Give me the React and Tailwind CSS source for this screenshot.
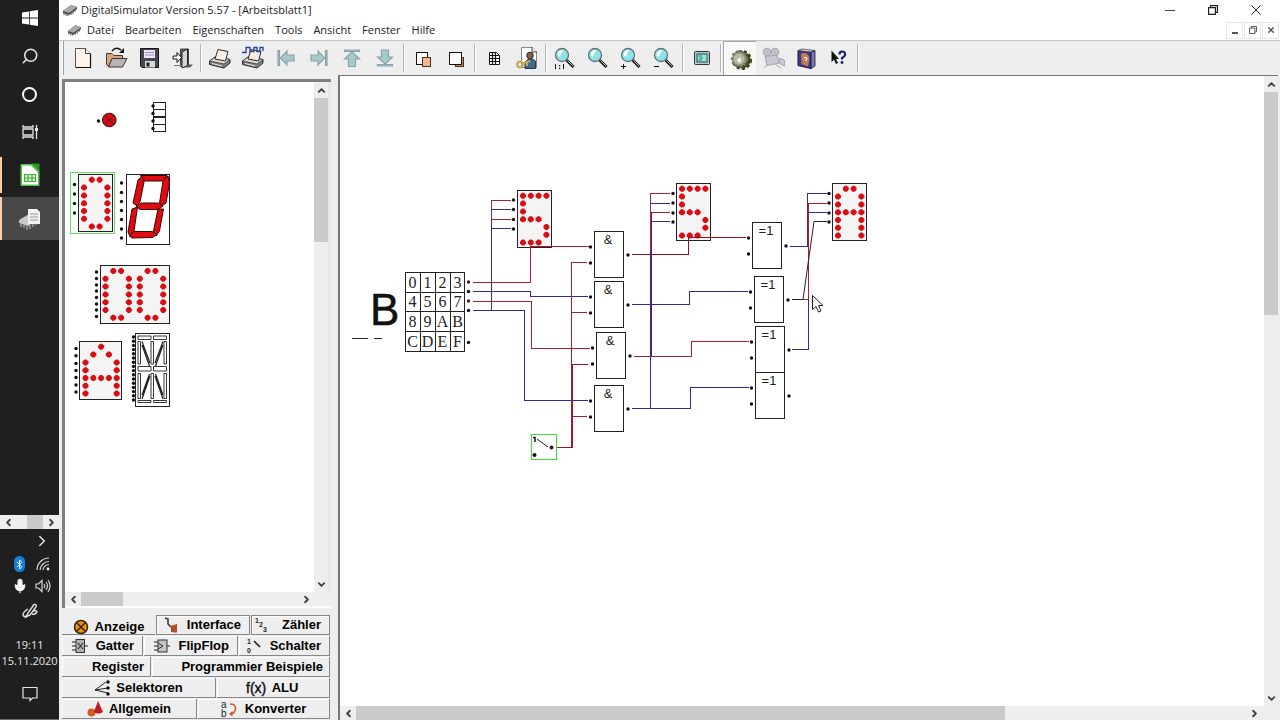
import React from "react";
import { Search, Bluetooth, ChevronLeft, ChevronRight, ChevronUp, ChevronDown, Mic } from "lucide-react";

const RED = "#a8202c";
const BLUE = "#2c2ca0";

/* ---------- small shared pieces ---------- */

function Chip({ className }) {
  return (
    <svg viewBox="0 0 16 12" className={className} aria-hidden="true">
      <path d="M1 7 L9 1 L15 3 L15 5 L7 11 L1 9 Z" fill="#4a4a4a" />
      <path d="M1 7 L9 1 L15 3 L7 9 Z" fill="#a9a9a9" />
      <path d="M2 9 V11 M4 10 V12 M6 10 V12 M9 9 V11 M11 8 V10 M13 6 V8" stroke="#555" />
    </svg>
  );
}

function ScrollBar({ vertical, offset, thumb, label }) {
  const box = vertical ? "w-[14px] flex-col" : "h-[14px] flex-row";
  const arrow = "flex size-4 shrink-0 items-center justify-center text-[#404040]";
  const A = vertical ? ChevronUp : ChevronLeft;
  const B = vertical ? ChevronDown : ChevronRight;
  return (
    <div className={"flex shrink-0 items-center bg-[#eeeeee] " + box} role="group" aria-label={label}>
      <button className={arrow} aria-label="Zurück"><A size={11} strokeWidth={4} /></button>
      <div className={"flex flex-1 overflow-hidden " + (vertical ? "w-full flex-col" : "h-full flex-row")}>
        <div className={offset + " shrink-0"} />
        <div className={thumb + " shrink-0 bg-[#cacaca]"} />
      </div>
      <button className={arrow} aria-label="Weiter"><B size={11} strokeWidth={4} /></button>
    </div>
  );
}

/* ---------- Windows taskbar ---------- */

function TaskButton({ label, active, open, children }) {
  return (
    <button
      aria-label={label}
      className={"flex h-[43px] w-full items-center pr-[2px] " + (active ? "bg-[#484848]" : "")}
    >
      <span className={"w-[2px] bg-[#fbcdab] " + (active ? "h-full" : open ? "h-9" : "h-0")} />
      <span className="flex flex-1 justify-center">{children}</span>
    </button>
  );
}

function Taskbar() {
  const top = "flex h-9 items-center justify-center";
  return (
    <aside className="flex w-[59px] shrink-0 flex-col bg-[#1f1f1f] text-[#e6e6e6]">
      <div className="flex flex-col gap-[2px]">
        <button className={top} aria-label="Start">
          <svg viewBox="0 0 16 16" className="size-4" fill="#fff">
            <path d="M0 2.4 L7 1.4 V7.6 H0 Z M7.8 1.3 L16 0 V7.6 H7.8 Z M0 8.4 H7 V14.6 L0 13.6 Z M7.8 8.4 H16 V16 L7.8 14.7 Z" />
          </svg>
        </button>
        <button className={top} aria-label="Suche"><Search size={18} strokeWidth={2} className="-scale-x-100" /></button>
        <button className={top} aria-label="Cortana"><span className="size-[15px] rounded-full border-2 border-white" /></button>
        <button className={top} aria-label="Taskansicht">
          <svg viewBox="0 0 16 16" className="size-4" fill="none" stroke="#e6e6e6" strokeWidth="1.3">
            <path d="M1 1 V3 H11 V1 M1 15 V13 H11 V15 M1 5 H11 V11 H1 Z M14.5 1 V4 M14.5 7 V15" />
            <path d="M14.5 4 V7" strokeWidth="3" />
          </svg>
        </button>
      </div>
      <div className="flex flex-col gap-px pt-[3px]">
        <TaskButton label="LibreOffice Calc" open>
          <svg viewBox="0 0 20 24" className="h-6 w-5">
            <path d="M.5 1 H13 L19.500 8 V23 H.5 Z" fill="#4fc246" />
            <path d="M2 2.500 H11 L18 9.500 V21.500 H2 Z" fill="#fff" />
            <path d="M12 0.500 H19.500 V8 Z" fill="#2a9424" />
            <path d="M4.500 11.500 H15.500 V18.500 H4.500 Z M4.500 15 H15.500 M8 11.500 V18.500 M12 11.500 V18.500" fill="#d9f2d6" stroke="#43b23a" strokeWidth="1.200" />
          </svg>
        </TaskButton>
        <TaskButton label="DigitalSimulator" active>
          <svg viewBox="0 0 24 24" className="size-6">
            <path d="M1 13 L11 7 L21 12 L10 19 L1 16 Z" fill="#c9c9c9" />
            <path d="M3 17 V20 M6 18 V21 M9 19 V23 M12 18 V22 M15 16 V20 M18 15 V18" stroke="#a3a3a3" strokeWidth="1.4" />
            <path d="M10 2 H19 L22 5 V17 H10 Z" fill="#f2f2f2" />
            <path d="M12 7 H20 M12 10 H20 M12 13 H20" stroke="#9a9a9a" />
          </svg>
        </TaskButton>
      </div>
      <div className="mt-auto bg-white">
        <ScrollBar label="Taskleiste" offset="w-[11px]" thumb="w-4 h-full" />
      </div>
      <div className="flex flex-col items-center">
        <button className="flex h-6 w-full items-center justify-end pr-2" aria-label="Ausgeblendete Symbole"><ChevronRight size={18} /></button>
        <div className="grid w-full grid-cols-2 place-items-center pl-2 pr-1">
          <button className="flex h-[22px] items-center" aria-label="Bluetooth">
            <span className="flex h-4 w-[11px] items-center justify-center rounded-md bg-[#1180d8] text-white"><Bluetooth size={11} /></span>
          </button>
          <button className="flex h-[22px] items-center" aria-label="WLAN">
            <svg viewBox="0 0 14 14" className="size-[14px]" fill="none" stroke="#d8d8d8" strokeWidth="1.2">
              <path d="M1 13 A12 12 0 0 1 13 1 M4 13 A9 9 0 0 1 13 4.500 M7 13 A6 6 0 0 1 13 7.500" />
              <circle cx="12" cy="12" r="1.400" fill="#fff" stroke="none" />
            </svg>
          </button>
          <button className="flex h-[22px] items-center" aria-label="Mikrofon"><Mic size={16} fill="#fff" strokeWidth={1.8} /></button>
          <button className="flex h-[22px] items-center" aria-label="Lautstärke">
            <svg viewBox="0 0 16 14" className="h-[14px] w-4" fill="none" stroke="#d8d8d8" strokeWidth="1.2">
              <path d="M1 5 H3.500 L7 1.500 V12.500 L3.500 9 H1 Z M9 5 Q10.500 7 9 9 M11 3 Q14 7 11 11 M13 1 Q17 7 13 13" />
            </svg>
          </button>
        </div>
        <button className="flex h-7 items-center" aria-label="Stift">
          <svg viewBox="0 0 16 16" className="size-4" fill="none" stroke="#e6e6e6" strokeWidth="1.4">
            <path d="M4 14 L6 10 L12 1.500 Q15 1 14 4 L8 12 Z M6 6 Q1 9 1 12 Q2 15 6 12 M10 9 Q14 6 15 9 Q13 12 10 11" />
          </svg>
        </button>
        <time className="flex flex-col pt-3 text-center font-['Open_Sans',sans-serif] text-[11px] leading-4 whitespace-nowrap">
          <span>19:11</span>
          <span>15.11.2020</span>
        </time>
        <button className="flex h-[51px] w-full items-center justify-center border-b border-[#6a6a6a]" aria-label="Benachrichtigungen">
          <svg viewBox="0 0 16 16" className="size-4" fill="none" stroke="#e6e6e6" strokeWidth="1.2">
            <path d="M1 1.500 H15 V12 H10.500 L8 14.500 V12 H1 Z" />
          </svg>
        </button>
      </div>
    </aside>
  );
}

/* ---------- toolbar icons, drawn on a 24 x 24 grid ---------- */

function Lens({ children }) {
  return (
    <>
      <path d="M13.500 14 L20.500 21" stroke="#1c1c1c" strokeWidth="3" />
      <path d="M14.500 14.500 L20 20" stroke="#b8b8b8" strokeWidth="1" />
      <circle cx="9" cy="9" r="6.500" fill="#8fe3e6" stroke="#5c747c" strokeWidth="1.300" />
      <path d="M4.500 9 Q5 4 10.500 4 Q8.500 6 7 11 Z" fill="#fff" />
      {children}
    </>
  );
}

function Printer() {
  return (
    <>
      <path d="M1.500 15 L7 11 L22 13.500 V17 L16 22 L1.500 18.500 Z" fill="#7e7e7e" stroke="#2a2a2a" />
      <path d="M1.500 15 L7 11 L22 13.500 L16 18 Z" fill="#d9d9d9" stroke="#3a3a3a" strokeWidth=".8" />
      <path d="M7 13 L10 3.500 L20 5.500 L17.500 15 Z" fill="#fbeee2" stroke="#2a2a2a" />
      <path d="M4 17.500 L14 20" stroke="#e8e8e8" />
    </>
  );
}

const arrowStyle = { fill: "#a4cccc", stroke: "#8ca4a8", strokeWidth: 1.2 };

const icons = {
  neu: (
    <>
      <path d="M4.500 2.500 H14.500 L19.500 7.500 V21.500 H4.500 Z" fill="#fff3ea" stroke="#555" />
      <path d="M14.500 2.500 V7.500 H19.500" fill="#fff" stroke="#3a3a3a" />
      <path d="M19.500 8 V21.500 H5" fill="none" stroke="#111" strokeWidth="1.200" />
    </>
  ),
  oeffnen: (
    <>
      <path d="M2.500 7.500 H8 L10 9.500 H18.500 V13 H8 L4.500 20.500 L2.500 18 Z" fill="#dba481" stroke="#4a3528" />
      <path d="M8 12.500 H23 L18.500 21 H4.500 Z" fill="#b9b4b4" stroke="#3a3230" />
      <path d="M8 5 Q12 0 17 4" fill="none" stroke="#111" strokeWidth="1.500" />
      <path d="M20 2 V7 H15 Z" fill="#111" />
    </>
  ),
  speichern: (
    <>
      <path d="M3.500 2.500 H21.500 V21.500 H5 L3.500 20 Z" fill="#4a4650" stroke="#15131a" />
      <rect x="7" y="4" width="11" height="8" fill="#ece6f6" />
      <path d="M8 6.500 H17 M8 9 H17" stroke="#9c86c6" strokeWidth="1.200" />
      <rect x="8" y="15" width="10" height="6.500" fill="#d9d9d9" />
      <rect x="9.500" y="16.500" width="3" height="4" fill="#222" />
    </>
  ),
  beenden: (
    <>
      <path d="M10.500 3 H18.500 V20.500 H10.500 Z" fill="#666" stroke="#444" />
      <path d="M12 6 L17.500 3 V19.500 L12 22 Z" fill="#d6d6d6" stroke="#222" />
      <path d="M13 21.500 L18 18.500 H23 L20 21.500 Z" fill="#555" />
      <path d="M3 10 H7 V6.500 L11.500 11.500 L7 16.500 V13 H3 Z" fill="#fff" stroke="#111" />
      <path d="M4 19.500 H12" stroke="#777" />
    </>
  ),
  drucken: <Printer />,
  signaldruck: (
    <>
      <Printer />
      <path d="M1 6.500 H5 V1.500 H9 V5.500 H13 V1.500 H16 V5.500 H19 V1.500 H22 V5" fill="none" stroke="#24409a" strokeWidth="1.300" />
    </>
  ),
  anfang: <path d="M4 4.500 H5.500 V19.500 H4 Z M6.500 12 L13 5 V9 H20 V15 H13 V19 Z" {...arrowStyle} />,
  ende: <path d="M20 4.500 H18.500 V19.500 H20 Z M17.500 12 L11 5 V9 H4 V15 H11 V19 Z" {...arrowStyle} />,
  hoch: <path d="M4.500 4 H19.500 V5.500 H4.500 Z M12 6 L19.500 13 H15.500 V20.500 H8.500 V13 H4.500 Z" {...arrowStyle} />,
  runter: <path d="M4.500 20 H19.500 V18.500 H4.500 Z M12 18 L19.500 11 H15.500 V4 H8.500 V11 H4.500 Z" {...arrowStyle} />,
  vorne: (
    <>
      <rect x="5.500" y="6.500" width="11" height="12" fill="#fff" stroke="#111" />
      <rect x="11.500" y="11.500" width="8" height="9" fill="#f5b78a" stroke="#4a3020" />
    </>
  ),
  hinten: (
    <>
      <rect x="11.500" y="11.500" width="8" height="9" fill="#c9855a" stroke="#4a3020" />
      <rect x="5.500" y="6.500" width="12" height="12" fill="#fff" stroke="#111" />
    </>
  ),
  raster: (
    <>
      <path d="M7.500 6.500 H14.500 L17.500 9.500 V18.500 H7.500 Z" fill="#fff" stroke="#111" />
      <path d="M10.500 6 V18 M13.500 6 V18 M7.500 9.500 H17 M7.500 12.500 H17 M7.500 15.500 H17" stroke="#111" strokeWidth="1.200" />
    </>
  ),
  benutzer: (
    <>
      <path d="M6.500 1.500 H17 L21.500 5.500 V21.500 H6.500 Z" fill="#fff" stroke="#888" />
      <path d="M17 1 V6 H22" fill="#eee" stroke="#444" />
      <circle cx="15" cy="9.500" r="3.300" fill="#8b5a44" stroke="#3a2620" />
      <path d="M10 22.500 V16 Q15 10 20.500 15 V22.500 Z" fill="#3e6a8e" stroke="#24384e" />
      <circle cx="5" cy="18.500" r="2.800" fill="none" stroke="#c8a95a" strokeWidth="2.200" />
      <path d="M7 17.500 L15 15 M12 16 V20" stroke="#c8a95a" strokeWidth="2.200" />
    </>
  ),
  eins: (
    <Lens>
      <path d="M2.500 18 V23 M10.500 18 V23" stroke="#111" />
      <path d="M6 19 H7.200 V20.200 H6 Z M6 21.800 H7.200 V23 H6 Z" fill="#111" />
    </Lens>
  ),
  lupe: <Lens />,
  plus: <Lens><path d="M2 20.500 H7 M4.500 18 V23" stroke="#111" /></Lens>,
  minus: <Lens><path d="M2 20.500 H7" stroke="#111" /></Lens>,
  bildschirm: (
    <>
      <rect x="4.500" y="5.500" width="15" height="13" rx="1" fill="#b9c7c7" stroke="#2a3a3a" />
      <rect x="7" y="8" width="10" height="8" fill="#8fe9dd" stroke="#24504c" />
      <path d="M8.500 10 H12 M9.500 12 H13 M8.500 14 H12" stroke="#155" strokeWidth=".8" />
    </>
  ),
  zahnrad: (
    <>
      <circle cx="14" cy="13" r="8.500" fill="#3c431e" stroke="#3c431e" strokeWidth="3" strokeDasharray="3 2.200" />
      <circle cx="11.500" cy="12" r="7.500" fill="#8f957a" stroke="#74795c" strokeWidth="2.500" strokeDasharray="2.500 2" />
      <circle cx="11" cy="12" r="5.500" fill="#b4b9a4" />
      <path d="M9 13 L12 10 L13.500 14 L11 16 Z" fill="#f4f6ee" />
    </>
  ),
  kamera: (
    <g fill="#c9c9d2" stroke="#a6a6b0">
      <circle cx="6" cy="6" r="3.800" />
      <circle cx="14" cy="6" r="3.800" />
      <path d="M4 10.500 L16 9 L18 17 L6 19.500 Z M18 12 L23.500 14 V20 L18 17 Z" />
      <path d="M6 19 L3 22 M14 18 L20 22" />
      <circle cx="6" cy="6" r="1.200" fill="#eee" />
      <circle cx="14" cy="6" r="1.200" fill="#eee" />
    </g>
  ),
  buch: (
    <>
      <path d="M4 4.500 L17 6 V22.500 L4 19.500 Z" fill="#3d3a8e" stroke="#17164a" />
      <path d="M4 4.500 L8 3 L21 4.500 L17 6 Z" fill="#e8e8e8" stroke="#444" strokeWidth=".8" />
      <path d="M17 6 L21 4.500 V20 L17 22.500 Z" fill="#7a74a8" stroke="#17164a" strokeWidth=".8" />
      <path d="M7 8 Q13 5 15.500 12 L14 20.500 L7.500 18 Z" fill="#c7794e" />
      <path d="M10 12.500 Q12 10 13 12.500 L11.500 15" fill="none" stroke="#fff" strokeWidth="1.200" />
    </>
  ),
  hilfe: (
    <>
      <path d="M4.500 4.500 V16 L7 13.500 L9 18 L11 17 L9 13 H12 Z" fill="#111" />
      <path d="M12.500 8.500 Q12.500 5.500 15 5.500 Q18.500 5.500 18 9 Q17.500 11 15 12 V13.500" fill="none" stroke="#1a1a6e" strokeWidth="2.200" />
      <circle cx="15" cy="16.500" r="1.400" fill="#1a1a6e" />
    </>
  ),
};

const toolGroups = [
  [["neu", "Neu"], ["oeffnen", "Öffnen"], ["speichern", "Speichern"], ["beenden", "Beenden"]],
  [["drucken", "Drucken"], ["signaldruck", "Signale drucken"], ["anfang", "Anfang"], ["ende", "Ende"], ["hoch", "Hoch"], ["runter", "Runter"]],
  [["vorne", "In den Vordergrund"], ["hinten", "In den Hintergrund"]],
  [["raster", "Raster"], ["benutzer", "Benutzer"]],
  [["eins", "Zoom 1:1"], ["lupe", "Zoom"], ["plus", "Vergrößern"], ["minus", "Verkleinern"]],
  [["bildschirm", "Bildschirm"]],
  [["zahnrad", "Simulation"], ["kamera", "Aufnahme"], ["buch", "Hilfethemen"], ["hilfe", "Direkthilfe"]],
];

function Toolbar() {
  return (
    <div role="toolbar" className="flex h-[35px] shrink-0 items-stretch border-t border-[#c4c4c4] bg-[#eeeeee] pl-[3px]">
      <div className="mr-[2px] w-[2px] border-r border-[#9c9c9c] bg-white" />
      {toolGroups.map((group, i) => (
        <div key={i} className="flex">
          {group.map(([id, label]) => (
            <button
              key={id}
              aria-label={label}
              className={"flex w-[33px] items-center justify-center " + (id === "zahnrad" ? "border-l border-t border-[#a8a8a8] bg-[#f8f8f8]" : "")}
            >
              <svg viewBox="0 0 24 24" className="size-6">{icons[id]}</svg>
            </button>
          ))}
          <div className="my-[2px] w-[5px] py-px"><div className="ml-[2px] h-full w-[2px] border-r border-white bg-[#b4b4b4]" /></div>
        </div>
      ))}
    </div>
  );
}

/* ---------- schematic parts ---------- */

function Ports({ x, ys, color = "#111" }) {
  return ys.map((y) => <circle key={y} cx={x} cy={y} r="1.700" fill={color} />);
}

const ZERO = [".##.", "#..#", "#..#", "#..#", "#..#", "#..#", ".##."];
const FIVE = ["####", "#...", "#...", "###.", "...#", "...#", "###."];
const HEXA = [".##.", "#..#", "#..#", "####", "#..#", "#..#", "#..#"];
const BIGA = ["..#..", ".#.#.", "#...#", "#...#", "#####", "#...#", "#...#"];

/* Each lamp is a small octagon, close to a diamond. */
function Dots({ x, y, rows }) {
  return rows.flatMap((row, r) =>
    [...row].map((c, i) =>
      c === "#" ? (
        <path
          key={r + "-" + i}
          d={`M${x + i * 7.8 - 3} ${y + r * 7.8 - 1} l2 -2 h2 l2 2 v2 l-2 2 h-2 l-2 -2 Z`}
          fill="#d90d14"
        />
      ) : null
    )
  );
}

function Box({ x, y, w, h, fill = "#fff", stroke = "#222" }) {
  return <rect x={x + 0.5} y={y + 0.5} width={w} height={h} fill={fill} stroke={stroke} shapeRendering="crispEdges" />;
}

function DotDisplay({ x, y, rows, frame = "#222" }) {
  return (
    <>
      <Box x={x} y={y} w={34} h={57} fill="#f4f4f4" stroke={frame} />
      <Dots x={x + 6} y={y + 5.8} rows={rows} />
    </>
  );
}

function Wire({ p, c }) {
  return <polyline points={p} fill="none" stroke={c} shapeRendering="crispEdges" />;
}

function Gate({ x, y, sign, size = 13, out = true }) {
  return (
    <>
      <Box x={x} y={y} w={29} h={46} />
      <text x={x + 14} y={y + 13} fontSize={size} textAnchor="middle" fill="#222">{sign}</text>
      <Ports x={x - 3.5} ys={[y + 16, y + 32]} />
      {out && <Ports x={x + 34} ys={[y + 24]} />}
    </>
  );
}

const keypad = ["0123", "4567", "89AB", "CDEF"];

function Schematic() {
  return (
    <svg width="923" height="629" viewBox="340 76 923 629" className="block font-['Liberation_Sans',sans-serif]" role="img" aria-label="Schaltplan">
      <text x="370" y="325" fontSize="44" fill="#111" stroke="#111" strokeWidth=".5">B</text>
      <path d="M352 338.500 H368 M374 338.500 H382" stroke="#222" shapeRendering="crispEdges" />

      <Box x={405} y={272} w={59} h={79} />
      <path d="M420.500 272 V351 M435.500 272 V351 M450.500 272 V351 M405 292.500 H464 M405 311.500 H464 M405 331.500 H464" stroke="#222" shapeRendering="crispEdges" />
      {keypad.map((row, r) =>
        [...row].map((k, c) => (
          <text key={k} x={412.5 + c * 15} y={287.5 + r * 19.7} fontSize="16" textAnchor="middle" fill="#222" className="font-['Liberation_Serif',serif]">{k}</text>
        ))
      )}
      <Ports x={468.5} ys={[291.5, 310.5, 342.5]} />
      <Ports x={468.5} ys={[282, 301]} color="#5a1418" />

      <DotDisplay x={517} y={190} rows={FIVE} />
      <DotDisplay x={676} y={183} rows={FIVE} />
      <DotDisplay x={832} y={183} rows={HEXA} />
      <Ports x={513.5} ys={[200, 209.5, 219.5, 229]} />
      <Ports x={673} ys={[193.5, 203, 213, 222]} />
      <Ports x={829} ys={[193.5, 203, 213, 222]} />

      <Wire c={RED} p="473,282.5 530.5,282.5 530.5,246.5 589,246.5" />
      <Wire c={BLUE} p="473,291.5 530.5,291.5 530.5,296.5 588,296.5" />
      <Wire c={RED} p="473,301.5 531.5,301.5 531.5,348.5 590,348.5" />
      <Wire c={BLUE} p="473,310.5 524.5,310.5 524.5,400.5 588,400.5" />
      <Wire c={BLUE} p="491.5,310 491.5,219" />
      <Wire c="#7c2c70" p="491.5,219 491.5,200" />
      <Wire c={RED} p="491,200.5 511,200.5" />
      <Wire c={BLUE} p="491,209.5 511,209.5" />
      <Wire c={RED} p="491,219.5 511,219.5" />
      <Wire c={BLUE} p="491,228.5 511,228.5" />

      <Wire c={RED} p="587,262.5 571.5,262.5 571.5,447" />
      <Wire c={RED} p="572,312.5 587,312.5" />
      <Wire c="#9c1820" p="588,364.5 572.5,364.5 572.5,447.5 556,447.5" />
      <Wire c={RED} p="573,416.5 587,416.5" />

      <Wire c="#94141e" p="632,254.5 688.5,254.5 688.5,237.5 746,237.5" />
      <Wire c={BLUE} p="632,304.5 689.5,304.5 689.5,291.5 748,291.5" />
      <Wire c={RED} p="634,356.5 691.5,356.5 691.5,341.5 749,341.5" />
      <Wire c={BLUE} p="632,408.5 690.5,408.5 690.5,387.5 749,387.5" />
      <Wire c={BLUE} p="650.5,408 650.5,250" />
      <Wire c="#94304c" p="650.5,250 650.5,193" />
      <Wire c="#701850" p="651.5,356 651.5,212" />
      <Wire c={RED} p="650,193.5 670,193.5" />
      <Wire c={BLUE} p="651,203.5 670,203.5" />
      <Wire c={RED} p="652,212.5 670,212.5" />
      <Wire c={BLUE} p="652,221.5 670,221.5" />

      <Wire c={BLUE} p="827,193.5 807.5,193.5 807.5,246.5 790,246.5" />
      <Wire c={BLUE} p="827,212.5 808.5,212.5 808.5,349.5 792,349.5" />
      <Wire c={RED} p="827,203.5 808.5,203.5 808.5,299.5 802,299.5" />
      <Wire c="#702060" p="807.5,246 807.5,203" />
      <path d="M827 221.500 H814 L803 299.500 H792" fill="none" stroke="#222" />

      <Gate x={594} y={231} sign="&" />
      <Gate x={594} y={281} sign="&" />
      <Gate x={596} y={332} sign="&" />
      <Gate x={594} y={385} sign="&" />
      <Gate x={752} y={222} sign="=1" />
      <Gate x={754} y={276} sign="=1" />
      <Gate x={755} y={326} sign="=1" />
      <Gate x={755} y={372} sign="=1" />

      <Box x={531} y={434} w={25} h={25} stroke="#3fdc3f" />
      <path d="M533 437.500 H535 V442" fill="none" stroke="#111" strokeWidth="1.500" />
      <path d="M537 439 L548 447" fill="none" stroke="#222" />
      <circle cx="534.500" cy="455" r="2" fill="#111" />
      <circle cx="551.500" cy="447.500" r="2" fill="#4a1014" />

      <path d="M812.500 295.500 V309.500 L816 306.500 L818.500 312 L821 311 L818.500 305.500 H823 Z" fill="#fff" stroke="#222" />
    </svg>
  );
}

function Palette() {
  const bars = [102, 109, 117, 124];
  return (
    <svg width="249" height="510" viewBox="65 82 249 510" className="block" role="img" aria-label="Anzeigeelemente">
      <circle cx="109.300" cy="120" r="6.800" fill="#d01018" stroke="#3a0a0a" />
      <path d="M104.500 115.500 L114 124.500 M114 115.500 L104.500 124.500" stroke="#6a0a0e" />
      <Ports x={98.5} ys={[121]} />
      {bars.map((y) => <Box key={y} x={153} y={y} w={12} h={7} />)}
      <Ports x={153} ys={[106, 113.5, 121, 128.5]} />

      <Box x={70} y={172} w={44} h={61} stroke="#5fe45f" />
      <DotDisplay x={78} y={174} rows={ZERO} />
      <Ports x={74.5} ys={[184.5, 194, 203.5, 213]} />

      <Box x={126} y={174} w={43} h={70} />
      <Ports x={121.5} ys={[183, 192.5, 201.5, 210.5, 219.5, 229, 238]} />
      <g fill="#e00a10" stroke="#3a0606">
        <path d="M140.500 175.500 H167 L163.500 181 H144 Z" />
        <path d="M163 181 L168 176 L169.500 183 L166 203 L162.500 205.500 L159.500 203 Z" />
        <path d="M138 180 L142 176.500 L144 182 L140 202 L136.500 205.500 L133 203 Z" />
        <path d="M136 206 L141 203 H158 L163 206 L158 209.500 H140 Z" />
        <path d="M132 209 L137.500 207 L134 231 L130 236.500 L128 232 Z" />
        <path d="M158 209 L163.500 209 L159.500 231 L156 236 L153.500 231 Z" />
        <path d="M129.500 236 L134 231.500 H152 L156.500 234 L153 237.500 L132 238 Z" />
      </g>

      <Box x={100} y={265} w={69} h={58} fill="#f4f4f4" />
      <Dots x={105.5} y={271} rows={ZERO} />
      <Dots x={139.8} y={271} rows={ZERO} />
      <Ports x={96.5} ys={[272, 278.5, 285, 291, 297.5, 304, 310, 316.5]} />

      <Box x={79} y={341} w={42} h={58} fill="#f4f4f4" />
      <Dots x={85.5} y={346.8} rows={BIGA} />
      <Ports x={76} ys={[348.5, 355.7, 363.5, 370.5, 377.5, 385, 392]} />

      <Box x={135} y={333} w={34} h={73} />
      <Ports x={133.5} ys={Array.from({ length: 16 }, (_, i) => 337 + i * 4.2)} />
      <g fill="#fff" stroke="#222" strokeWidth=".9">
        <path d="M138 336 H151 V339.500 H138 Z M153.500 336 H166.500 V339.500 H153.500 Z" />
        <path d="M138 341.500 H140.500 V364 H138 Z M151 341.500 H153.500 V364 H151 Z M164 341.500 H166.500 V364 H164 Z" />
        <path d="M138 366.500 H151 V371 H138 Z M153.500 366.500 H166.500 V371 H153.500 Z" />
        <path d="M138 373.500 H140.500 V398.500 H138 Z M151 373.500 H153.500 V398.500 H151 Z M164 373.500 H166.500 V398.500 H164 Z" />
        <path d="M138 400.500 H151 V402.500 H138 Z M153.500 400.500 H166.500 V402.500 H153.500 Z" />
      </g>
      <path
        d="M142 341.500 L150 363 M142 345 L149.500 366 M163 341.500 L155 363 M163 345 L155.500 366 M142 399 L150 376 M142 395 L149.500 374 M163 399 L155 376 M163 395 L155.500 374"
        fill="none" stroke="#222" strokeWidth="1.200"
      />
    </svg>
  );
}

/* ---------- category tabs ---------- */

const tabIcons = {
  Anzeige: (
    <>
      <circle cx="8" cy="8" r="6.500" fill="#e8931a" stroke="#3a2208" strokeWidth="1.500" />
      <path d="M4 4 L12 12 M12 4 L4 12" stroke="#3a2208" strokeWidth="1.500" />
    </>
  ),
  Interface: (
    <>
      <path d="M2 1 L5 2 L5 7 L9 11 V15" fill="none" stroke="#3a3a3a" strokeWidth="1.600" />
      <path d="M7.500 9 L14 7 V15.500 H10 Z" fill="#b8501c" />
    </>
  ),
  Zähler: (
    <g fill="#222" fontSize="7" fontWeight="700">
      <text x="1" y="6">1</text><text x="5" y="10">2</text><text x="9" y="15">3</text>
    </g>
  ),
  Gatter: (
    <>
      <path d="M0 4 H4 M0 8 H4 M0 12 H4 M12 8 H16" stroke="#222" />
      <rect x="4" y="1.500" width="8.500" height="13" fill="#b0b0b0" stroke="#333" />
      <path d="M6 5 L11 11 M11 5 L6 11" stroke="#111" />
    </>
  ),
  FlipFlop: (
    <>
      <path d="M0 4 H4 M0 12 H4 M0 8 H4 M13 8 H16" stroke="#222" />
      <rect x="4" y="2" width="9" height="12" fill="#c4c4c4" stroke="#333" />
      <path d="M4 5 L9 8 L4 11" fill="none" stroke="#333" />
    </>
  ),
  Schalter: (
    <>
      <g fill="#222" fontSize="7"><text x="1" y="6">1</text><text x="1" y="15">0</text></g>
      <path d="M8 3 L14 9" stroke="#222" strokeWidth="1.600" />
    </>
  ),
  Selektoren: (
    <>
      <path d="M1 10 L12 2 M1 10 L14 8 M1 10 L14 13" stroke="#222" />
      <circle cx="14" cy="2" r="1.700" /><circle cx="14" cy="8" r="1.700" /><circle cx="14" cy="14" r="1.700" />
    </>
  ),
  ALU: <text x="-2" y="13" fontSize="14" fontWeight="400" stroke="#222" strokeWidth=".4">f(x)</text>,
  Allgemein: (
    <>
      <circle cx="4.500" cy="11.500" r="4" fill="#cf5f24" />
      <path d="M11 0 L16 11 Q11 14 7 11 Z" fill="#c01a22" />
    </>
  ),
  Konverter: (
    <>
      <g fill="#222" fontSize="10" fontWeight="400"><text x="0" y="7">a</text><text x="0" y="16">b</text></g>
      <path d="M9 3 Q15 3 14.500 8 Q14 12 10 13" fill="none" stroke="#d4572c" strokeWidth="1.600" />
      <path d="M8 13 L11.500 10 V15.500 Z" fill="#d4572c" />
    </>
  ),
};

const tabRows = [
  [["Anzeige", "w-[93px]"], ["Interface", "w-[94px]"], ["Zähler", "flex-1"]],
  [["Gatter", "w-[81px]"], ["FlipFlop", "w-[94px]"], ["Schalter", "flex-1"]],
  [["Register", "w-[89px]"], ["Programmier Beispiele", "flex-1"]],
  [["Selektoren", "w-[154px]"], ["ALU", "flex-1"]],
  [["Allgemein", "w-[135px]"], ["Konverter", "flex-1"]],
];

const tabPad = {
  Anzeige: "justify-center gap-[6px]", Interface: "justify-end gap-2 pr-2", Zähler: "justify-end gap-3 pr-2",
  Gatter: "justify-end gap-2 pr-2", FlipFlop: "justify-end gap-2 pr-2", Schalter: "justify-end gap-2 pr-2",
  Register: "justify-end pr-[6px]", "Programmier Beispiele": "justify-end pr-[6px]",
  Selektoren: "justify-center gap-[6px]", ALU: "justify-center gap-2",
  Allgemein: "justify-center gap-[6px]", Konverter: "justify-center gap-2",
};

function CategoryTabs() {
  return (
    <div role="tablist" className="flex shrink-0 flex-col gap-px pb-px pl-[3px] pr-2 pt-[7px] font-['Liberation_Sans',sans-serif] text-[13px] leading-4 font-bold text-black">
      {tabRows.map((row, i) => (
        <div key={i} className="flex h-5 gap-px">
          {row.map(([name, width]) => {
            const on = name === "Anzeige";
            return (
              <button
                key={name}
                role="tab"
                aria-selected={on}
                className={
                  "flex items-center whitespace-nowrap border-[#868686] " + width + " " + tabPad[name] + " " +
                  (on ? "border-b pt-[5px]" : "border-b border-r shadow-[inset_1px_1px_0_#fff] " + (i === 0 ? "border-t border-l" : ""))
                }
              >
                {tabIcons[name] && (
                  <svg viewBox="0 0 16 16" className="size-4 shrink-0 overflow-visible">{tabIcons[name]}</svg>
                )}
                {name}
              </button>
            );
          })}
        </div>
      ))}
    </div>
  );
}

/* ---------- window ---------- */

const menus = ["Datei", "Bearbeiten", "Eigenschaften", "Tools", "Ansicht", "Fenster", "Hilfe"];

function Restore({ className }) {
  return (
    <svg viewBox="0 0 10 10" className={className} fill="none" stroke="currentColor" strokeWidth="1.200">
      <path d="M.6 2.600 H7.400 V9.400 H.6 Z M2.600 2.600 V.6 H9.400 V7.400 H7.400" />
    </svg>
  );
}

function Cross({ className, w = 1 }) {
  return (
    <svg viewBox="0 0 10 10" className={className} stroke="currentColor" strokeWidth={w}>
      <path d="M.5 .5 L9.500 9.500 M9.500 .5 L.5 9.500" />
    </svg>
  );
}

export default function App() {
  const mdi = "flex size-[17px] items-center justify-center border border-[#e6e6e6] text-[#555]";
  return (
    <div className="flex h-screen overflow-hidden bg-[#eeeeee]">
      <Taskbar />
      <div className="flex min-w-0 flex-1 flex-col">
        <header className="flex h-5 shrink-0 items-center bg-white pl-[3px] font-['Open_Sans',sans-serif] text-[11px] text-[#222]">
          <Chip className="h-3 w-4" />
          <h1 className="pl-[3px]">DigitalSimulator Version 5.57 - [Arbeitsblatt1]</h1>
          <div className="ml-auto flex pr-[2px] text-[#222]">
            <button className="flex w-[43px] items-center justify-center" aria-label="Minimieren"><span className="h-px w-[10px] bg-[#444]" /></button>
            <button className="flex w-[43px] items-center justify-center" aria-label="Wiederherstellen"><Restore className="size-[10px]" /></button>
            <button className="flex w-[44px] items-center justify-center" aria-label="Schließen"><Cross className="size-[10px]" /></button>
          </div>
        </header>
        <nav className="flex h-5 shrink-0 items-center bg-white pl-2 pr-px font-['Open_Sans',sans-serif] text-[11px] text-[#222]">
          <Chip className="mr-[5px] h-3 w-[15px]" />
          <div className="flex gap-[11px]">
            {menus.map((m) => <button key={m}>{m}</button>)}
          </div>
          <div className="ml-auto flex gap-px">
            <button className={mdi} aria-label="Blatt minimieren"><span className="mt-[5px] h-[2px] w-[6px] bg-[#555]" /></button>
            <button className={mdi} aria-label="Blatt wiederherstellen"><Restore className="size-2" /></button>
            <button className={mdi} aria-label="Blatt schließen"><Cross className="size-[6px]" w={2.4} /></button>
          </div>
        </nav>
        <Toolbar />
        <div className="flex min-h-0 flex-1">
          <aside className="flex w-[279px] shrink-0 flex-col pt-1">
            <div className="ml-[3px] mr-[7px] flex min-h-0 flex-1 flex-col border-l-[3px] border-t-[3px] border-[#808080]">
              <div className="flex min-h-0 flex-1 border-r-[3px] border-[#e6e6e6]">
                <div className="min-h-0 min-w-0 flex-1 overflow-hidden bg-white"><Palette /></div>
                <ScrollBar vertical label="Palette senkrecht" offset="h-0" thumb="h-36 w-full" />
              </div>
              <div className="border-b-2 border-white bg-[#eeeeee] pr-[17px]">
                <ScrollBar label="Palette waagrecht" offset="w-0" thumb="w-[42px] h-full" />
              </div>
            </div>
            <CategoryTabs />
          </aside>
          <main className="mr-[2px] flex min-w-0 flex-1 flex-col border-l-2 border-t border-[#777] bg-white">
            <div className="flex min-h-0 flex-1">
              <div className="min-h-0 min-w-0 flex-1 overflow-hidden"><Schematic /></div>
              <ScrollBar vertical label="Blatt senkrecht" offset="h-0" thumb="h-[223px] w-full" />
            </div>
            <div className="bg-[#eeeeee] pr-4">
              <ScrollBar label="Blatt waagrecht" offset="w-0" thumb="w-[649px] h-full" />
            </div>
          </main>
        </div>
      </div>
    </div>
  );
}
